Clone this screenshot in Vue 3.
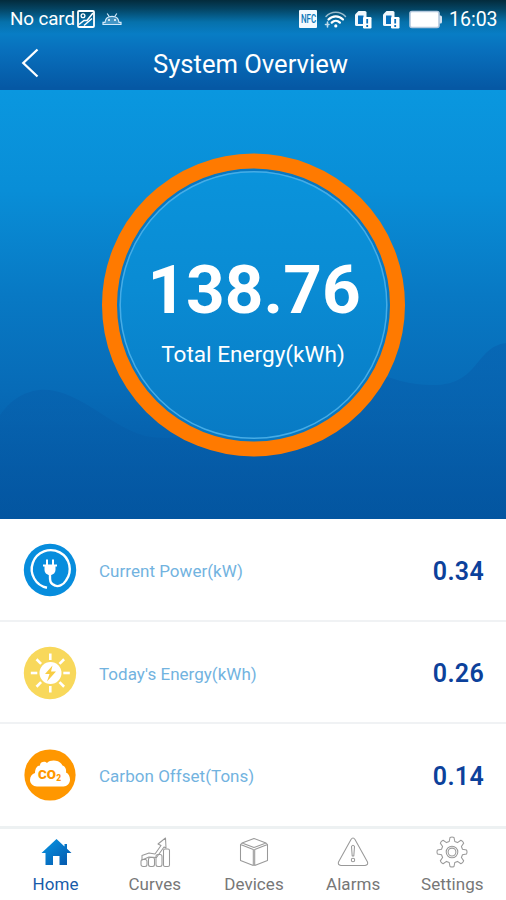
<script setup>
const rows = [
  { icon: 'plug', label: 'Current Power(kW)', value: '0.34' },
  { icon: 'sun', label: "Today's Energy(kWh)", value: '0.26' },
  { icon: 'co2', label: 'Carbon Offset(Tons)', value: '0.14' },
]
const tabs = ['Home', 'Curves', 'Devices', 'Alarms', 'Settings']
const rays = [0, 45, 90, 135, 180, 225, 270, 315]
</script>

<template>
  <div class="screen">
    <header class="top">
      <div class="status">
        <span class="carrier">No card</span>
        <svg class="pic" width="18" height="18" viewBox="0 0 18 18" fill="none" stroke="#fff" stroke-width="1.8">
          <rect x="1" y="1" width="16" height="16" rx="1" />
          <circle cx="6" cy="5.800" r="1.900" stroke-width="1.300" />
          <path d="M2 14.500l5-4h3L16 3M7 15.500l8-7" stroke-width="1.600" />
        </svg>
        <svg class="droid" width="20" height="13" viewBox="0 0 20 13">
          <path d="M1 11.500v-2.200h2C3.300 5.500 6 3.300 10 3.300s6.700 2.200 7 6h2v2.200z" fill="#8fc5e8" fill-opacity=".45" stroke="#d5eafa" stroke-width="1.200" />
          <path d="M5.200.5l2 3M14.800.5l-2 3" stroke="#d5eafa" stroke-width="1.200" />
          <circle cx="7" cy="7" r="1" fill="#fff" /><circle cx="13" cy="7" r="1" fill="#fff" />
        </svg>
        <span class="gap"></span>
        <span class="nfc"><b>NFC</b></span>
        <svg class="wifi" width="24" height="19" viewBox="0 0 24 19" fill="none" stroke="#fff" stroke-linecap="round">
          <path d="M3 6.500C8 .8 17.500.8 22.500 6.500" stroke-width="1.500" opacity=".6" />
          <path d="M5.500 9.500c4-4.300 10.500-4.300 14.500 0" stroke-width="2.200" />
          <path d="M8.700 12.600c2.400-2.400 5.800-2.400 8.200 0" stroke-width="2.200" />
          <circle cx="12.800" cy="15.900" r="1.600" fill="#fff" stroke="none" />
          <path d="M4.500 12v5M2.500 14.500h3.500" stroke-width="1.600" opacity=".75" />
        </svg>
        <svg v-for="n in 2" :key="n" class="sim" width="18" height="19" viewBox="0 0 18 19">
          <path d="M1 4.500L4.500 1H11q1.500 0 1.500 1.500V16H2.500Q1 16 1 14.500z" fill="#f1f8fd" />
          <path d="M4 5.500h5.500V14H4z" fill="#0870bc" />
          <rect x="9" y="7" width="8.500" height="11.500" rx="1.200" fill="#fff" />
          <path d="M13.200 9v4.500M13.200 15v2" stroke="#0870bc" stroke-width="1.800" />
        </svg>
        <svg class="bat" width="34" height="19" viewBox="0 0 34 19">
          <rect x="1" y="1.500" width="29" height="16" rx="2" fill="#fff" stroke="#b5c9de" stroke-width="1.600" />
          <path d="M30.500 5.500h1q1.500 0 1.500 1.500v5q0 1.500-1.500 1.500h-1z" fill="#d5e2ef" />
        </svg>
        <span class="time">16:03</span>
      </div>
      <div class="bar">
        <svg class="back" width="18" height="30" viewBox="0 0 18 30" fill="none" stroke="#fff" stroke-width="2.300">
          <path d="M16.500 1.500L2.300 15l14.200 13.500" />
        </svg>
        <h1>System Overview</h1>
      </div>
    </header>

    <section class="hero">
      <svg class="waves" width="506" height="429" viewBox="0 0 506 429">
        <defs>
          <linearGradient id="wave" x1="0" y1="250" x2="0" y2="429" gradientUnits="userSpaceOnUse">
            <stop offset="0" stop-color="#0761b0" />
            <stop offset=".4" stop-color="#075fab" />
            <stop offset="1" stop-color="#0355a0" />
          </linearGradient>
          <linearGradient id="disc" x1="0" y1="0" x2="0" y2="1">
            <stop offset="0" stop-color="#0a94dc" />
            <stop offset=".45" stop-color="#0a8bd3" />
            <stop offset="1" stop-color="#0879c3" />
          </linearGradient>
        </defs>
        <path d="M0 325C16 302 38 297 55 301c32 7 58 36 90 45 50 10 120-20 205-60 25-12 38 8 80 9 50 2 44-38 76-42v176H0z" fill="url(#wave)" opacity=".6" />
        <circle cx="253.500" cy="215" r="145" fill="url(#disc)" />
        <circle cx="253.500" cy="215" r="135.500" fill="none" stroke="#0878c2" stroke-width="3" />
        <circle cx="253.500" cy="215" r="133.300" fill="none" stroke="#46ace6" stroke-width="1.500" />
        <circle cx="253.500" cy="215" r="144" fill="none" stroke="#ff7a00" stroke-width="15" />
      </svg>
      <div class="reading">
        <strong>138.76</strong>
        <span>Total Energy(kWh)</span>
      </div>
    </section>

    <main class="list">
      <div v-for="r in rows" :key="r.icon" class="row">
        <svg v-if="r.icon === 'plug'" width="54" height="54" viewBox="0 0 54 54">
          <circle cx="27" cy="27" r="26.200" fill="#078ddd" />
          <path d="M24 44.800A19 19 0 1 1 43 37.500C40 42.500 35 44 32 42.500c-6-2-5-6-5-13" fill="none" stroke="#fff" stroke-width="2.400" />
          <path d="M20 21.500h14v2h-1.500v3c0 3-2 5.500-5.500 5.500s-5.500-2.500-5.500-5.500v-3H20zM23 16.500h2v5h-2zM29 16.500h2v5h-2z" fill="#fff" />
        </svg>
        <svg v-else-if="r.icon === 'sun'" width="54" height="54" viewBox="0 0 54 54">
          <circle cx="27" cy="27" r="26.200" fill="#f8d85b" />
          <circle cx="27.500" cy="27" r="11" fill="#fff" />
          <path v-for="a in rays" :key="a" d="M27.300 7.500v6.500" :transform="`rotate(${a} 27.300 27)`" stroke="#fff" stroke-width="2.600" />
          <path d="M29.500 19.500L22 28h4.500l-2.500 7.500L33 25.500h-5z" fill="#f8cd43" />
        </svg>
        <svg v-else width="54" height="54" viewBox="0 0 54 54">
          <circle cx="27" cy="27" r="25.600" fill="#ff9700" />
          <path d="M14 38.500c-4 0-7-3-7-6.500 0-3.500 2-6 5-7 0-4 2-7.500 5-7.500 0-4 5-5 7-2.500 4-4 13-3 15.500 2.500 3 1 4 4 3.500 7 2.500 1 4 4 4 7 0 4-3 7-6.500 7z" fill="#fff" />
          <text x="15" y="31" class="co" textLength="18" lengthAdjust="spacingAndGlyphs">CO</text>
          <text x="33.300" y="32.800" class="two">2</text>
        </svg>
        <span class="label">{{ r.label }}</span>
        <b class="value">{{ r.value }}</b>
      </div>
    </main>

    <nav class="tabs">
      <div v-for="(t, i) in tabs" :key="t" class="tab" :class="{ active: i === 0 }">
        <svg width="32" height="32" viewBox="0 0 32 32" fill="none" stroke="#999" stroke-width="1.050" stroke-linejoin="round">
          <template v-if="i === 0">
            <defs>
              <linearGradient id="house" x1="0" y1="0" x2="1" y2="1">
                <stop offset="0" stop-color="#0797e5" /><stop offset="1" stop-color="#0655aa" />
              </linearGradient>
            </defs>
            <path d="M16.500 3L1.500 17h4v12h7.500V20h6.500v9H27V17h4.500l-4.500-4.200V8h-2.500v2.500z" fill="url(#house)" stroke="none" />
          </template>
          <g v-else-if="i === 1">
            <rect x="2" y="23.500" width="6" height="7" rx="2" /><rect x="9.500" y="21.500" width="6" height="9" rx="2" />
            <rect x="17" y="18.500" width="6" height="12" rx="2" /><rect x="24.500" y="13" width="6" height="17.500" rx="1.500" />
            <path d="M3 19.500l7-2.500 6 1 6-8.500-3-1.500L26.500 2l.5 10-2-1-7.500 10.500-7.500-.5-7 3z" />
          </g>
          <g v-else-if="i === 2">
            <path d="M16 2.500L28 7 16 11.500 4 7zM2.500 8.500l12.800 5v16l-12.800-5zM29.500 8.500l-12.800 5v16l12.800-5zM4 7l-1.500 1.500M28 7l1.500 1.500" />
          </g>
          <g v-else-if="i === 3">
            <path d="M14 3.500q2-3 4 0L30.500 26q1 3-2.500 3.500H4q-3.500-.5-2.500-3.500z" />
            <path d="M14.500 10.500q1.500-2.500 3 0l-.7 9.500h-1.600z" /><circle cx="16" cy="24" r="1.700" />
          </g>
          <g v-else>
            <path d="M14 1.500q2-1 4 0l.8 4 2.700 1.100 3.400-2.300q2 .8 2.800 2.800l-2.300 3.400 1.100 2.700 4 .8q1 2 0 4l-4 .8-1.100 2.700 2.300 3.400q-.8 2-2.800 2.800l-3.400-2.300-2.700 1.100-.8 4q-2 1-4 0l-.8-4-2.700-1.100-3.400 2.300q-2-.8-2.800-2.800l2.300-3.400L5.500 18.800l-4-.8q-1-2 0-4l4-.8 1.100-2.700-2.300-3.400q.8-2 2.800-2.800l3.400 2.300 2.700-1.100z" />
            <circle cx="16" cy="16" r="5.800" /><circle cx="16" cy="16" r="3.900" />
          </g>
        </svg>
        <span>{{ t }}</span>
      </div>
    </nav>
  </div>
</template>

<style>
body { margin: 0; background: #fff; }
</style>

<style scoped>
.screen { width: 506px; height: 900px; display: flex; flex-direction: column; overflow: hidden; font-family: Roboto, "Liberation Sans", sans-serif; background: #fff; }
.top { height: 90px; flex: none; color: #fff; background: linear-gradient(#032b3c 0, #044463 9px, #0671ab 22px, #087dc5 34px, #0870bd 50px, #0558a4 88px, #0558a4 90px); }
.status { height: 38px; display: flex; align-items: center; box-sizing: border-box; padding: 0 8px 0 10px; font-size: 19.500px; }
.carrier { width: 67px; white-space: nowrap; font-size: 18.800px; letter-spacing: -.1px; }
.droid { margin-left: 7px; }
.gap { flex: 1; }
.nfc { width: 18px; height: 18px; background: #f3faff; color: #0876b7; display: flex; align-items: center; justify-content: center; font-size: 12px; border-radius: 1px; }
.nfc b { transform: scaleX(.66); font-weight: 500; }
.wifi { margin-left: 6px; }
.sim { margin-left: 7px; }
.sim + .sim { margin-left: 10px; }
.bat { margin-left: 9px; }
.time { margin-left: 6px; width: 49px; white-space: nowrap; }
.bar { height: 52px; display: grid; grid-template-columns: 60px 1fr 60px; align-items: center; }
.back { margin: 0 0 3px 21px; }
h1 { margin: 0 5px 1px 0; text-align: center; font-weight: 400; font-size: 25.600px; white-space: nowrap; }
.hero { height: 429px; flex: none; display: grid; background: linear-gradient(#0a97df 0, #098ed7 100px, #0879c4 205px, #076bb7 300px, #055ca8 380px, #0355a0 429px); }
.waves, .reading { grid-area: 1 / 1; }
.reading { z-index: 1; display: flex; flex-direction: column; align-items: center; color: #fff; padding-top: 158px; }
.reading strong { font-size: 67.500px; line-height: 84px; font-weight: 700; padding-left: 2px; }
.reading span { font-size: 22.600px; line-height: 30px; margin-top: 8px; }
.list { height: 310px; flex: none; }
.row { height: 102.500px; box-sizing: border-box; display: flex; align-items: center; padding: 2px 22px 0 23px; border-bottom: 2px solid #f0f2f4; }
.row:last-child { height: 105px; padding-top: 0; border-bottom: 3px solid #edf1f2; }
.label { margin: 2px 0 0 22px; font-size: 17px; letter-spacing: .03px; color: #72b3df; flex: 1; }
.value { margin-top: 2px; font-size: 25px; font-weight: 600; color: #0c419b; letter-spacing: .3px; }
.co { font: 900 12.500px Roboto, sans-serif; fill: #ff9700; }
.two { font: 900 8.500px Roboto, sans-serif; fill: #ff9700; }
.tabs { flex: 1; display: grid; grid-template-columns: repeat(5, 99.200px); padding: 0 4px 0 6px; }
.tab { display: flex; flex-direction: column; align-items: center; padding-top: 7px; font-size: 17px; letter-spacing: .05px; color: #777; }
.tab span { line-height: 22px; margin-top: 5px; }
.active { color: #175ba9; }
</style>
